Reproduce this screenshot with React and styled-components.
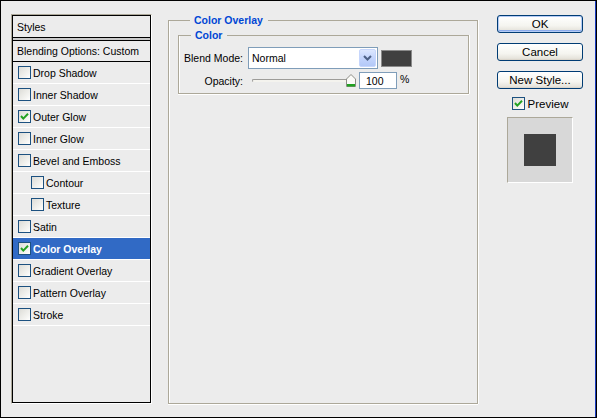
import React from 'react';
import styled, { createGlobalStyle } from 'styled-components';

const GlobalStyle = createGlobalStyle`
  html, body {
    margin: 0;
    padding: 0;
    background: #ececec;
  }
  body {
    font-family: 'Liberation Sans', Arial, sans-serif;
    font-size: 10.5px;
    color: #000;
  }
`;

const styleList = [
  { label: 'Drop Shadow', checked: false },
  { label: 'Inner Shadow', checked: false },
  { label: 'Outer Glow', checked: true },
  { label: 'Inner Glow', checked: false },
  { label: 'Bevel and Emboss', checked: false },
  { label: 'Contour', checked: false, indent: true },
  { label: 'Texture', checked: false, indent: true },
  { label: 'Satin', checked: false },
  { label: 'Color Overlay', checked: true, selected: true },
  { label: 'Gradient Overlay', checked: false },
  { label: 'Pattern Overlay', checked: false },
  { label: 'Stroke', checked: false },
];

const opacity = 100;

const Window = styled.div`
  width: 597px;
  height: 418px;
  box-sizing: border-box;
  border: 1px solid #000;
  box-shadow: inset -1px 0 #1a3cc0;
  background: #ececec;
  display: flex;
  align-items: flex-start;
  padding: 13px 13px 13px 10px;
`;

const StylesPanel = styled.div`
  width: 141px;
  align-self: stretch;
  box-sizing: border-box;
  border-top: 1px solid #aca899;
  border-left: 1px solid #aca899;
  border-bottom: 1px solid #fff;
  border-right: 1px solid #fff;
  display: flex;
`;

const PanelInner = styled.div`
  flex: 1;
  border: 1px solid #000;
  display: flex;
  flex-direction: column;
`;

const PanelHeader = styled.div`
  height: 21px;
  display: flex;
  align-items: center;
  padding-left: 4px;
  border-bottom: 1px solid #000;
`;

const HeaderRule = styled.div`
  height: 2px;
  background: #c9c9c9;
  border-bottom: 1px solid #000;
`;

const BlendingRow = styled.div`
  height: 20px;
  display: flex;
  align-items: center;
  padding-left: 4px;
  border-bottom: 1px solid #000;
`;

const StyleRow = styled.div`
  height: 21px;
  display: flex;
  align-items: center;
  gap: 2px;
  padding-left: ${(p) => (p.$indent ? '18px' : '5px')};
  border-bottom: 1px solid #fff;
  background: ${(p) => (p.$selected ? '#316ac5' : 'transparent')};
  color: ${(p) => (p.$selected ? '#fff' : '#000')};
  font-weight: ${(p) => (p.$selected ? 'bold' : 'normal')};
`;

const Box = styled.span`
  width: 13px;
  height: 13px;
  box-sizing: border-box;
  border: 1px solid #1c5180;
  background: linear-gradient(135deg, #dcdcd7 0%, #f4f4f1 70%, #fff 100%);
  display: inline-flex;
  align-items: center;
  justify-content: center;
  flex: none;
`;

const CheckBox = ({ checked }) => (
  <Box>
    {checked ? (
      <svg width="11" height="11" viewBox="0 0 11 11">
        <polyline points="2,5 4.3,7.6 9,2.8" fill="none" stroke="#21a121" strokeWidth="2" />
      </svg>
    ) : null}
  </Box>
);

const Group = styled.fieldset`
  margin: 0;
  min-width: 0;
  box-sizing: border-box;
  border: 1px solid #aca899;
  box-shadow: inset 1px 0 #fff, 1px 0 #fff, 0 1px #fff;
  padding: ${(p) => (p.$inner ? '5px 0 4px 0' : '0 8px 0 9px')};
`;

const OuterGroup = styled(Group)`
  width: 310px;
  margin-left: 16px;
  align-self: stretch;
`;

const InnerGroup = styled(Group)`
  margin-top: 2px;
`;

const Legend = styled.legend`
  margin-left: 12px;
  padding: 0 5px 0 4px;
  font-weight: bold;
  color: #0046d5;
  line-height: 13px;
`;

const FieldRow = styled.div`
  display: flex;
  align-items: center;
  margin-top: ${(p) => (p.$first ? '0' : '3px')};
`;

const FieldLabel = styled.span`
  width: 64px;
  margin-right: 5px;
  text-align: right;
  white-space: nowrap;
`;

const Select = styled.div`
  width: 130px;
  height: 22px;
  box-sizing: border-box;
  border: 1px solid #7f9db9;
  background: #fff;
  display: flex;
  align-items: center;
  padding: 0 1px 0 3px;
`;

const SelectValue = styled.span`
  flex: 1;
`;

const DropButton = styled.span`
  width: 17px;
  height: 18px;
  box-sizing: border-box;
  border: 1px solid #c6d6fc;
  border-radius: 2px;
  background: linear-gradient(180deg, #dce7fe 0%, #c4d5fc 50%, #b3c8f7 100%);
  display: flex;
  align-items: center;
  justify-content: center;
`;

const Swatch = styled.span`
  width: 31px;
  height: 17px;
  box-sizing: border-box;
  margin-left: 3px;
  border: 1px solid #8a8a8a;
  background: #404040;
`;

const Slider = styled.div`
  width: 108px;
  height: 13px;
  position: relative;
  display: flex;
  align-items: center;
`;

const Track = styled.div`
  flex: 1;
  height: 3px;
  margin: 0 4px;
  box-sizing: border-box;
  border-top: 1px solid #9d9c99;
  border-left: 1px solid #9d9c99;
  border-radius: 2px;
  background: #f4f3ee;
`;

const Thumb = styled.svg`
  position: absolute;
  top: 0;
`;

const NumberInput = styled.div`
  width: 38px;
  height: 17px;
  box-sizing: border-box;
  margin-left: 3px;
  border: 1px solid #7f9db9;
  background: #fff;
  display: flex;
  align-items: center;
  padding-left: 6px;
`;

const Unit = styled.span`
  margin-left: 3px;
  margin-top: -4px;
`;

const SideColumn = styled.div`
  width: 86px;
  margin-left: 19px;
  margin-top: 1px;
  display: flex;
  flex-direction: column;
  gap: 10px;
  font-size: 11.5px;
`;

const Button = styled.div`
  height: 18px;
  box-sizing: border-box;
  border: 1px solid #003c74;
  border-radius: 3px;
  background: linear-gradient(180deg, #fff 0%, #f5f5f0 60%, #e6e4dc 90%, #d6d0c5 100%);
  box-shadow: ${(p) => (p.$default ? 'inset 0 0 0 1px #b4cbf5, inset 0 -1px 0 1px #8aaaeb' : 'none')};
  display: flex;
  align-items: center;
  justify-content: center;
`;

const PreviewToggle = styled.div`
  display: flex;
  align-items: center;
  justify-content: center;
  gap: 3px;
  margin-top: -2px;
`;

const PreviewBox = styled.div`
  width: 66px;
  height: 66px;
  box-sizing: border-box;
  align-self: center;
  margin-top: -3px;
  border-top: 1px solid #aca899;
  border-left: 1px solid #aca899;
  border-bottom: 1px solid #fff;
  border-right: 1px solid #fff;
  background: #d8d8d8;
  display: flex;
  align-items: center;
  justify-content: center;
`;

const PreviewSwatch = styled.div`
  width: 32px;
  height: 32px;
  background: #404040;
`;

const App = () => (
  <>
    <GlobalStyle />
    <Window>
      <StylesPanel>
        <PanelInner>
          <PanelHeader>Styles</PanelHeader>
          <HeaderRule />
          <BlendingRow>Blending Options: Custom</BlendingRow>
          {styleList.map((item) => (
            <StyleRow key={item.label} $indent={item.indent} $selected={item.selected}>
              <CheckBox checked={item.checked} />
              {item.label}
            </StyleRow>
          ))}
        </PanelInner>
      </StylesPanel>

      <OuterGroup>
        <Legend>Color Overlay</Legend>
        <InnerGroup $inner>
          <Legend>Color</Legend>
          <FieldRow $first>
            <FieldLabel>Blend Mode:</FieldLabel>
            <Select>
              <SelectValue>Normal</SelectValue>
              <DropButton>
                <svg width="9" height="6" viewBox="0 0 9 6">
                  <polyline points="1,1 4.5,4.5 8,1" fill="none" stroke="#4d6185" strokeWidth="2" />
                </svg>
              </DropButton>
            </Select>
            <Swatch />
          </FieldRow>
          <FieldRow>
            <FieldLabel>Opacity:</FieldLabel>
            <Slider>
              <Track />
              <Thumb
                width="10"
                height="13"
                viewBox="0 0 10 13"
                style={{ left: `${4 + (opacity / 100) * 94}px` }}>
                <polygon points="0.5,5 5,0.5 9.5,5 9.5,12.5 0.5,12.5" fill="#fbfbf8" stroke="#8d8d86" />
                <rect x="1" y="10" width="8" height="2.5" fill="#21a121" />
              </Thumb>
            </Slider>
            <NumberInput>{opacity}</NumberInput>
            <Unit>%</Unit>
          </FieldRow>
        </InnerGroup>
      </OuterGroup>

      <SideColumn>
        <Button $default>OK</Button>
        <Button>Cancel</Button>
        <Button>New Style...</Button>
        <PreviewToggle>
          <CheckBox checked />
          Preview
        </PreviewToggle>
        <PreviewBox>
          <PreviewSwatch />
        </PreviewBox>
      </SideColumn>
    </Window>
  </>
);

export default App;
